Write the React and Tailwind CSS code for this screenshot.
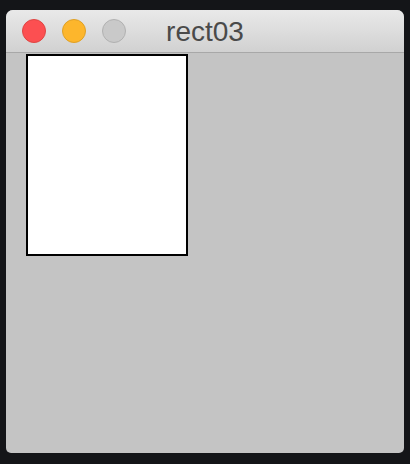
export default function App() {
  const lights = [
    "bg-[#fc4f51] border-[#df4543]",
    "bg-[#fdb62c] border-[#dfa025]",
    "bg-[#c9c9c9] border-[#b1b1b1]",
  ];

  return (
    <div className="w-[410px] h-[464px] bg-[#141518] pt-[10px] pl-[6px]">
      <div className="w-[398px] h-[443px] rounded-t-[7px] rounded-b-[5px] overflow-hidden bg-[#c4c4c4] flex flex-col">
        {/* Title bar */}
        <div className="h-[43px] shrink-0 grid grid-cols-[1fr_auto_1fr] items-center bg-gradient-to-b from-[#e9e9e9] to-[#d1d1d1] border-b border-[#a8a8a8]">
          <div className="flex gap-[16px] pl-[16px]">
            {lights.map((c, i) => (
              <span key={i} className={`w-[24px] h-[24px] rounded-full border ${c}`} />
            ))}
          </div>
          <span className="text-[28px] leading-none pt-[2px] text-[#4a4a4a] font-['Liberation_Sans',Arial,sans-serif]">
            rect03
          </span>
          <div />
        </div>

        {/* Sketch canvas */}
        <div className="flex-1 pt-[1px] pl-[20px]">
          <div className="w-[162px] h-[202px] bg-white border-2 border-black" />
        </div>
      </div>
    </div>
  );
}
